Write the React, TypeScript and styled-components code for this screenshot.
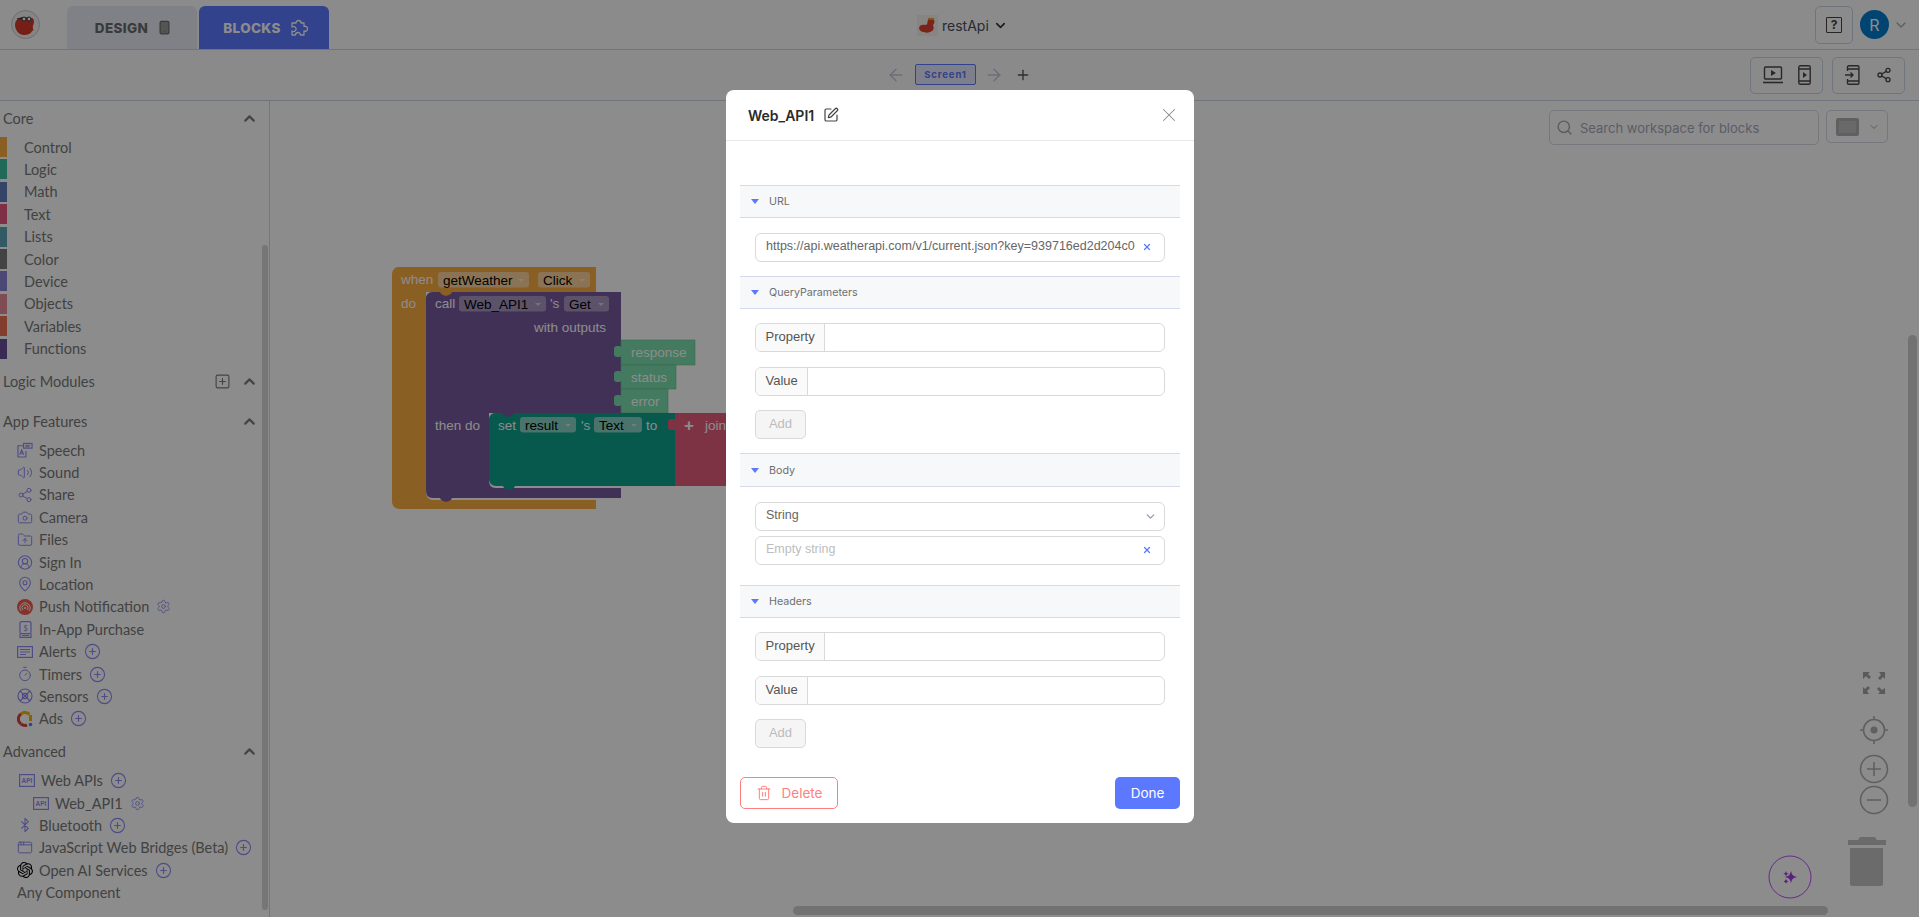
import React from 'react';
import styled, { createGlobalStyle } from 'styled-components';
import {
    AppWindow,
    Bluetooth,
    Camera,
    ChevronDown,
    ChevronUp,
    CircleUserRound,
    FolderUp,
    MapPin,
    Plus,
    Search,
    Settings,
    Share2,
    Smartphone,
    SquarePen,
    SquarePlus,
    Timer,
    Trash2,
    Volume2,
    X,
    ArrowLeft,
    ArrowRight,
    CirclePlus,
} from 'lucide-react';
import { SiOpenai } from 'react-icons/si';

const GlobalStyle = createGlobalStyle`
    html, body {
        margin: 0;
        height: 100%;
        overflow: hidden;
        background: #fff;
    }
    * {
        box-sizing: border-box;
    }
`;

const Page = styled.div`
    position: relative;
    width: 1919px;
    height: 917px;
    overflow: hidden;
    font-family: 'Inter', 'Liberation Sans', sans-serif;
    display: flex;
    flex-direction: column;
`;

const TopBar = styled.header`
    height: 50px;
    flex: none;
    display: flex;
    align-items: flex-end;
    background: #fdfeff;
    border-bottom: 1px solid #cdd3e6;
    padding: 0 10px 0 11px;
`;

const LogoBadge = styled.div`
    width: 29px;
    height: 29px;
    margin: 0 27px 10px 0;
    flex: none;
`;

const Tab = styled.div<{ $active?: boolean }>`
    width: 130px;
    height: 43px;
    margin-right: 2px;
    padding-left: 3px;
    border-radius: 6px 6px 0 0;
    display: flex;
    align-items: center;
    justify-content: center;
    gap: 9px;
    font-size: 13.5px;
    font-weight: 800;
    letter-spacing: 0.35px;
    background: ${p => (p.$active ? '#5b78ff' : '#e8ebf5')};
    color: ${p => (p.$active ? '#fff' : '#6b6b6b')};
`;

const ProjectName = styled.div`
    position: absolute;
    left: 917px;
    top: 13px;
    height: 24px;
    display: flex;
    align-items: center;
    gap: 4px;
    font-size: 14px;
    color: #4b4f5a;
`;

const TopRight = styled.div`
    margin-left: auto;
    display: flex;
    align-items: center;
    height: 49px;
`;

const HelpButton = styled.div`
    width: 38px;
    height: 38px;
    border: 1px solid #cdd3e6;
    border-radius: 5px;
    display: flex;
    align-items: center;
    justify-content: center;
    margin-right: 7px;
`;

const HelpGlyph = styled.span`
    width: 16px;
    height: 16px;
    border: 1.5px solid #444;
    border-radius: 1px;
    font-size: 12px;
    line-height: 13px;
    font-weight: 700;
    text-align: center;
    color: #444;
`;

const Avatar = styled.div`
    width: 29px;
    height: 29px;
    border-radius: 50%;
    background: #007dd0;
    color: #fff;
    font-size: 16px;
    display: flex;
    align-items: center;
    justify-content: center;
    margin-right: 4px;
`;

const ToolBar = styled.div`
    height: 51px;
    flex: none;
    display: flex;
    align-items: center;
    justify-content: flex-end;
    gap: 9px;
    padding-right: 14px;
    background: #fbfcfe;
    border-bottom: 1px solid #cdd3e6;
`;

const ScreenNav = styled.div`
    position: absolute;
    left: 886px;
    top: 62px;
    display: flex;
    align-items: center;
    height: 25px;
`;

const ScreenChip = styled.div`
    width: 61px;
    height: 21px;
    margin: 0 8px 0 9px;
    border: 1px solid #5b78ff;
    border-radius: 2px;
    background: #e3e8fb;
    color: #5b78ff;
    font-size: 9.5px;
    font-weight: 700;
    letter-spacing: 0.9px;
    display: flex;
    align-items: center;
    justify-content: center;
`;

const NavPlus = styled.span`
    display: flex;
    margin-left: 11px;
    color: #555;
`;

const ToolGroup = styled.div`
    width: 73px;
    height: 37px;
    border: 1px solid #cdd3e6;
    border-radius: 5px;
    display: flex;
    align-items: center;
    justify-content: space-around;
    padding: 0 4px;
`;

const Main = styled.div`
    flex: 1;
    display: flex;
    min-height: 0;
`;

const Sidebar = styled.aside`
    position: relative;
    width: 270px;
    flex: none;
    border-right: 1px solid #d6d9e4;
    font-family: 'Lato', 'Liberation Sans', sans-serif;
    font-size: 14.5px;
    color: #787878;
`;

const SideScroll = styled.div`
    position: absolute;
    right: 1px;
    top: 144px;
    width: 6px;
    height: 665px;
    border-radius: 3px;
    background: #d8d8d8;
`;

const Section = styled.section`
    margin-bottom: 4.5px;
`;

const SectionTitle = styled.div`
    height: 35px;
    display: flex;
    align-items: center;
    padding: 0 11px 0 3px;
    font-size: 14.5px;
    span {
        flex: 1;
    }
    svg {
        color: #7c7c7c;
    }
`;

const TitleAdd = styled.span`
    flex: none !important;
    display: flex;
    margin-right: 10px;
`;

const CategoryRow = styled.div`
    height: 22.4px;
    display: flex;
    align-items: center;
    padding-left: 24px;
    position: relative;
`;

const Swatch = styled.i<{ $color: string }>`
    position: absolute;
    left: 0;
    top: 1px;
    width: 7px;
    height: 20px;
    background: ${p => p.$color};
`;

const FeatureRow = styled.div<{ $indent?: number }>`
    height: 22.4px;
    display: flex;
    align-items: center;
    gap: 6px;
    padding-left: ${p => 17 + (p.$indent || 0)}px;
    white-space: nowrap;
`;

const IconSlot = styled.span`
    width: 16px;
    height: 16px;
    flex: none;
    display: flex;
    align-items: center;
    justify-content: center;
    color: #8f8bf5;
`;

const AddMark = styled.span`
    display: flex;
    color: #8f8bf5;
    margin-left: 1px;
`;

const Workspace = styled.div`
    position: relative;
    flex: 1;
`;

const BlockCanvas = styled.svg`
    position: absolute;
    left: -270px;
    top: -101px;
    width: 1919px;
    height: 917px;
    font-family: 'Liberation Sans', sans-serif;
    font-size: 13.5px;
    pointer-events: none;
`;

const SearchBox = styled.div`
    position: absolute;
    left: 1279px;
    top: 9px;
    width: 270px;
    height: 35px;
    border: 1px solid #d6d9e4;
    border-radius: 5px;
    display: flex;
    align-items: center;
    gap: 7px;
    padding-left: 6px;
    font-size: 13px;
    color: #a8a8ba;
    svg {
        color: #a8a8a8;
    }
`;

const ViewPicker = styled.div`
    position: absolute;
    left: 1556px;
    top: 9px;
    width: 62px;
    height: 33px;
    border: 1px solid #d6d9e4;
    border-radius: 5px;
    display: flex;
    align-items: center;
    gap: 9px;
    padding-left: 9px;
    color: #aaa;
`;

const ViewGlyph = styled.i`
    width: 23px;
    height: 18px;
    border: 3px solid #b0b0b0;
    border-radius: 2px;
    background: #c0c0c0;
`;

const CanvasScrollY = styled.div`
    position: absolute;
    right: 2px;
    top: 234px;
    width: 9px;
    height: 472px;
    border-radius: 5px;
    background: #d0d0d0;
`;

const CanvasScrollX = styled.div`
    position: absolute;
    left: 523px;
    bottom: 2px;
    width: 1035px;
    height: 9px;
    border-radius: 5px;
    background: #d0d0d0;
`;

const Dimmer = styled.div`
    position: absolute;
    inset: 0;
    background: rgba(0, 0, 0, 0.45);
    display: flex;
    justify-content: center;
    align-items: flex-start;
    padding-top: 90px;
`;

const Modal = styled.div`
    width: 468px;
    height: 733px;
    background: #fff;
    border-radius: 8px;
    margin-left: 1px;
    display: flex;
    flex-direction: column;
`;

const ModalHead = styled.div`
    height: 51px;
    flex: none;
    display: flex;
    align-items: center;
    padding: 0 14px 0 22px;
    border-bottom: 1px solid #e8e8e8;
    font-size: 14px;
    font-weight: 600;
    color: #2b2b2b;
    span {
        margin-right: 9px;
    }
`;

const CloseMark = styled.div`
    margin-left: auto;
    display: flex;
    color: #8a8a8a;
`;

const ModalBody = styled.div`
    flex: 1;
    padding: 44px 14px 0;
`;

const SectionBar = styled.div<{ $tall?: boolean }>`
    height: ${p => (p.$tall ? 34 : 33)}px;
    display: flex;
    align-items: center;
    gap: 10px;
    padding-left: 11px;
    background: #f7f8fa;
    border-top: 1px solid #d4daec;
    border-bottom: 1px solid #d4daec;
    font-size: 10.7px;
    color: #6f6f6f;
`;

const CaretDown = styled.i`
    width: 0;
    height: 0;
    border-left: 4px solid transparent;
    border-right: 4px solid transparent;
    border-top: 5px solid #5b78ff;
`;

const FieldStack = styled.div<{ $gap?: number; $bottom?: number }>`
    display: flex;
    flex-direction: column;
    align-items: flex-start;
    gap: ${p => p.$gap ?? 14.5}px;
    padding: 14.5px 15px ${p => p.$bottom ?? 14}px;
`;

const FieldRow = styled.div`
    width: 100%;
    height: 29px;
    border: 1px solid #d9d9d9;
    border-radius: 6px;
    display: flex;
    align-items: center;
    font-family: 'Liberation Sans', sans-serif;
    font-size: 13px;
    color: #666;
    overflow: hidden;
    background: #fff;
`;

const FieldPrefix = styled.div`
    height: 100%;
    flex: none;
    display: flex;
    align-items: center;
    padding: 0 9.5px 2px;
    background: #fafafa;
    border-right: 1px solid #d9d9d9;
    color: #555;
`;

const FieldValue = styled.div<{ $muted?: boolean }>`
    flex: 1;
    min-width: 0;
    padding: 0 0 2px 10px;
    white-space: nowrap;
    font-size: 12.5px;
    color: ${p => (p.$muted ? '#bdbdbd' : '#666')};
`;

const ClearMark = styled.div`
    width: 34px;
    flex: none;
    display: flex;
    justify-content: center;
    color: #5b78ff;
`;

const SelectMark = styled.div`
    width: 28px;
    flex: none;
    display: flex;
    justify-content: center;
    color: #9a9ab8;
`;

const AddButton = styled.div`
    width: 51px;
    height: 29px;
    padding-bottom: 2px;
    border: 1px solid #d9d9d9;
    border-radius: 5px;
    background: #f5f5f5;
    color: #bcbcbc;
    font-family: 'Liberation Sans', sans-serif;
    font-size: 13px;
    display: flex;
    align-items: center;
    justify-content: center;
`;

const ModalFoot = styled.div`
    display: flex;
    justify-content: space-between;
    padding: 15px 14px 15px;
`;

const DeleteButton = styled.div`
    width: 98px;
    height: 32px;
    border: 1px solid #ff7f7f;
    border-radius: 5px;
    color: #ff7f7f;
    display: flex;
    align-items: center;
    justify-content: center;
    gap: 10px;
    font-size: 13.5px;
`;

const DoneButton = styled.div`
    width: 65px;
    height: 32px;
    border-radius: 5px;
    background: #5b78ff;
    color: #fff;
    display: flex;
    align-items: center;
    justify-content: center;
    font-size: 13.5px;
`;

const CATEGORIES = [
    { name: 'Control', color: '#fbad43' },
    { name: 'Logic', color: '#3fbfa3' },
    { name: 'Math', color: '#5f7dbf' },
    { name: 'Text', color: '#e5577f' },
    { name: 'Lists', color: '#5ba5b8' },
    { name: 'Color', color: '#7a7a7a' },
    { name: 'Device', color: '#8a84d8' },
    { name: 'Objects', color: '#e58a96' },
    { name: 'Variables', color: '#ee7050' },
    { name: 'Functions', color: '#6b4f9c' },
];

const Logo = ({ size }: { size: number }) => (
    <svg width={size} height={size} viewBox="0 0 29 29">
        <circle cx="14.5" cy="14.5" r="14" fill="#f2f2f2" stroke="#c8c8d0" />
        <path d="M4 15c0-5 4-8 9-8s5 1 8 1c3 1 2 6 1 8s2 5-1 5c-1 3-5 4-8 4-5 0-9-5-9-10z" fill="#d63a2a" />
        <circle cx="13" cy="9" r="2" fill="#fff" stroke="#333" />
        <circle cx="18" cy="9" r="2" fill="#fff" stroke="#333" />
        <path d="M6 9l5-1" stroke="#333" strokeWidth="1.2" />
    </svg>
);

const DragonMark = () => (
    <svg width="21" height="21" viewBox="0 0 21 21">
        <rect width="21" height="21" fill="#f6f3ee" />
        <path d="M2 13c0-3 4-4 7-3 2-1 1-3 2-5 2-1 5-1 6 0 1 2 0 4-1 5 1 2 1 5-1 6-3 2-6 2-8 1-3 0-5-2-5-4z" fill="#e2402e" />
        <rect x="11" y="3" width="6" height="2" fill="#e8a020" />
    </svg>
);

const PuzzleMark = () => (
    <svg width="18" height="19" viewBox="0 0 18 19" fill="none" stroke="currentColor" strokeWidth="1.3" strokeLinejoin="round">
        <path d="M2 5h4a2.5 2.5 0 1 1 5 0h3v3.5a2.5 2.5 0 1 1 0 4.5v4h-3.5a2.5 2.5 0 1 0-5 0H2v-4a2.5 2.5 0 1 0 0-4z" />
    </svg>
);

const ApiIcon = () => (
    <svg width="16" height="13" viewBox="0 0 16 13">
        <rect x=".6" y=".6" width="14.8" height="11.8" fill="none" stroke="currentColor" strokeWidth="1.2" />
        <text x="8" y="9.2" textAnchor="middle" fontSize="6.5" fontWeight="700" fontFamily="Liberation Sans" fill="currentColor">
            API
        </text>
    </svg>
);

const SpeechIcon = () => (
    <svg width="17" height="16" viewBox="0 0 17 16" fill="none" stroke="currentColor" strokeWidth="1.2">
        <path d="M7 3.5H1v12h8.5V9" />
        <rect x="7" y="1" width="9" height="5" />
        <path d="M3 13l2-5 2 5M3.7 11.5h2.6M9 3h5M9 4.5h4" />
    </svg>
);

const PushIcon = () => (
    <svg width="16" height="16" viewBox="0 0 16 16">
        <circle cx="8" cy="8" r="8" fill="#f25c4d" />
        <path d="M4 12a5 5 0 1 1 8 0M6 11a3 3 0 1 1 4 0" fill="none" stroke="#fff" strokeWidth="1" />
        <circle cx="8" cy="9" r="1" fill="#fff" />
    </svg>
);

const PurchaseIcon = () => (
    <svg width="13" height="17" viewBox="0 0 13 17" fill="none" stroke="currentColor" strokeWidth="1.2">
        <rect x="1" y=".6" width="11" height="12" rx="1.5" />
        <path d="M1 12.5v3.8h11v-3.8M3 14.5h7" />
        <text x="6.5" y="10" textAnchor="middle" fontSize="8" fill="currentColor" stroke="none">
            $
        </text>
    </svg>
);

const AlertIcon = () => (
    <svg width="16" height="12" viewBox="0 0 16 12" fill="none" stroke="currentColor" strokeWidth="1.2">
        <rect x=".6" y=".6" width="14.8" height="10.8" />
        <path d="M3 3.5h10M3 6h10M3 8.5h6" />
    </svg>
);

const SensorIcon = () => (
    <svg width="16" height="16" viewBox="0 0 16 16" fill="none" stroke="currentColor" strokeWidth="1.2">
        <circle cx="8" cy="8" r="7" />
        <circle cx="8" cy="8" r="2.6" />
        <path d="M3 3l10 10M13 3L3 13" />
    </svg>
);

const AdsIcon = () => (
    <svg width="16" height="16" viewBox="0 0 16 16" fill="none">
        <path d="M12.5 3.5A6 6 0 0 0 4 3" stroke="#f4b400" strokeWidth="3" />
        <path d="M4 3a6 6 0 0 0 0 10" stroke="#db4437" strokeWidth="3" />
        <path d="M4 13a6 6 0 0 0 6 1" stroke="#db4437" strokeWidth="3" />
        <path d="M13.5 4v6" stroke="#f4b400" strokeWidth="3" />
        <circle cx="13.5" cy="13.5" r="1.8" fill="#4285f4" />
    </svg>
);

const Plusy = () => (
    <AddMark>
        <CirclePlus size={17} strokeWidth={1.6} />
    </AddMark>
);

const Gear = () => (
    <AddMark>
        <Settings size={15} strokeWidth={1.4} />
    </AddMark>
);

const Field = ({ x, w, y, label, fill }: { x: number; w: number; y: number; label: string; fill: string }) => (
    <g>
        <rect x={x} y={y} width={w} height={15.5} rx={3} fill={fill} />
        <text x={x + 5} y={y + 12.5} fill="#000">
            {label}
        </text>
        <path d={`M${x + w - 11} ${y + 7}h6l-3 3z`} fill="#fff" opacity={0.55} />
    </g>
);

const BlockText = ({ x, y, children }: { x: number; y: number; children: React.ReactNode }) => (
    <text x={x} y={y} fill="#fff">
        {children}
    </text>
);

const OutputBlock = ({ y, w, h, label }: { y: number; w: number; h: number; label: string }) => (
    <g>
        <rect x={621} y={y} width={w} height={h} fill="#7ddfae" stroke="#64c292" strokeWidth={0.6} />
        <rect x={614} y={y + 6} width={8} height={11} rx={3} fill="#7ddfae" />
        <BlockText x={631} y={y + 17}>
            {label}
        </BlockText>
    </g>
);

const Blocks = () => (
    <BlockCanvas viewBox="0 0 1919 917">
        <path
            d="M398 267H596V292H426V491c0 5 2 9 7 9H596V509H400c-5 0-8-3-8-8V275c0-5 3-8 6-8z"
            fill="#fbad43"
        />
        <BlockText x={401} y={284}>
            when
        </BlockText>
        <Field x={438} w={91} y={272} label="getWeather" fill="#fdd49b" />
        <Field x={538} w={52} y={272} label="Click" fill="#fdd49b" />
        <BlockText x={401} y={308}>
            do
        </BlockText>

        <path
            d="M432 292H621V413H489V480c0 5 2 8 7 8H621V498H433c-5 0-7-3-7-8V298c0-3 3-6 6-6z"
            fill="#77599f"
        />
        <path d="M440 292h12c-2 5-10 5-12 0z" fill="#fbad43" />
        <path d="M440 498c2 5 10 5 12 0z" fill="#77599f" />
        <BlockText x={435} y={308}>
            call
        </BlockText>
        <Field x={459} w={87} y={296} label="Web_API1" fill="#a896c2" />
        <BlockText x={550} y={308}>
            's
        </BlockText>
        <Field x={564} w={45} y={296} label="Get" fill="#a896c2" />
        <BlockText x={534} y={332}>
            with outputs
        </BlockText>
        <BlockText x={435} y={430}>
            then do
        </BlockText>

        <OutputBlock y={340} w={74} h={25} label="response" />
        <OutputBlock y={365} w={55} h={24} label="status" />
        <OutputBlock y={389} w={47} h={24} label="error" />

        <path
            d="M495 413H675V486H496c-4 0-7-3-7-7V419c0-3 3-6 6-6z"
            fill="#0ba38a"
        />
        <path d="M502 413h12c-2 5-10 5-12 0z" fill="#77599f" />
        <path d="M503 486c2 5 10 5 12 0z" fill="#0ba38a" />
        <BlockText x={498} y={430}>
            set
        </BlockText>
        <Field x={520} w={56} y={417} label="result" fill="#86d1c4" />
        <BlockText x={581} y={430}>
            's
        </BlockText>
        <Field x={594} w={48} y={417} label="Text" fill="#86d1c4" />
        <BlockText x={646} y={430}>
            to
        </BlockText>

        <rect x={675} y={413} width={60} height={73} fill="#e55e7f" />
        <rect x={668} y={419} width={9} height={11} rx={3} fill="#e55e7f" />
        <text x={684} y={431} fontSize={17} fontWeight={700} fill="#fff">
            +
        </text>
        <BlockText x={705} y={430}>
            join
        </BlockText>

        {/* workspace controls */}
        <g fill="#a0a5a8">
            <path d="M1863 672h7l-2 2 3 3-2 2-3-3-3 3zM1885 672v7l-2-2-3 3-2-2 3-3-2-3zM1863 694v-7l2 2 3-3 2 2-3 3 2 3zM1885 694h-7l2-2-3-3 2-2 3 3 3-2z" />
        </g>
        <g fill="none" stroke="#b0b0b0" strokeWidth={1.6}>
            <circle cx={1874} cy={730} r={10.5} />
            <path d="M1874 716v4M1874 740v4M1860 730h4M1884 730h4" />
            <circle cx={1874} cy={769} r={13.5} />
            <path d="M1867 769h14M1874 762v14" />
            <circle cx={1874} cy={800} r={13.5} />
            <path d="M1867 800h14" />
        </g>
        <circle cx={1874} cy={730} r={3.5} fill="#b0b0b0" />
        <g fill="#c4c4c4">
            <path d="M1848 840h10l2-3h15l2 3h9v5h-38z" />
            <path d="M1850 848h33v36c0 1-1 2-2 2h-29c-1 0-2-1-2-2z" />
        </g>
        <circle cx={1790} cy={877} r={21} fill="none" stroke="#c04dff" strokeWidth={1} />
        <path
            d="M1791 871c1 4 2 5 6 6-4 1-5 2-6 6-1-4-2-5-6-6 4-1 5-2 6-6zM1786 871l.8 2 2 .8-2 .8-.8 2-.8-2-2-.8 2-.8zM1786 879l.8 1.6 1.6.8-1.6.8-.8 1.6-.8-1.6-1.6-.8 1.6-.8z"
            fill="#a93ae8"
        />
    </BlockCanvas>
);

const PlayLaptop = () => (
    <svg width="20" height="18" viewBox="0 0 20 18" fill="none" stroke="#4a4a4a" strokeWidth="1.4">
        <rect x="1.5" y="1" width="17" height="12" rx="1" />
        <path d="M0 16.5h20" strokeWidth="1.6" />
        <path d="M8 4l5 3-5 3z" fill="#4a4a4a" stroke="none" />
    </svg>
);

const PlayPhone = () => (
    <svg width="13" height="20" viewBox="0 0 13 20" fill="none" stroke="#4a4a4a" strokeWidth="1.4">
        <rect x=".8" y=".8" width="11.4" height="18.4" rx="1.5" />
        <path d="M1 4h11M1 16h11" />
        <path d="M5 7l4 3-4 3z" fill="#4a4a4a" stroke="none" />
    </svg>
);

const ImportPhone = () => (
    <svg width="15" height="20" viewBox="0 0 15 20" fill="none" stroke="#4a4a4a" strokeWidth="1.4">
        <path d="M2.5 6V2c0-.7.5-1.2 1.2-1.2h9c.7 0 1.2.5 1.2 1.2v16c0 .7-.5 1.2-1.2 1.2h-9c-.7 0-1.2-.5-1.2-1.2v-4" />
        <path d="M3 4h11M3 16h11M0 10h8M5.5 7.5L8 10l-2.5 2.5" />
    </svg>
);

const App = () => (
    <Page>
        <GlobalStyle />
        <TopBar>
            <LogoBadge>
                <Logo size={29} />
            </LogoBadge>
            <Tab>
                DESIGN
                <Smartphone size={15} fill="#999" color="#6b6b6b" />
            </Tab>
            <Tab $active>
                BLOCKS
                <PuzzleMark />
            </Tab>
            <ProjectName>
                <DragonMark />
                restApi
                <ChevronDown size={15} strokeWidth={2.6} color="#333" />
            </ProjectName>
            <TopRight>
                <HelpButton>
                    <HelpGlyph>?</HelpGlyph>
                </HelpButton>
                <Avatar>R</Avatar>
                <ChevronDown size={16} color="#aaa" />
            </TopRight>
        </TopBar>
        <ToolBar>
            <ScreenNav>
                <ArrowLeft size={20} strokeWidth={1.6} color="#c4c8d4" />
                <ScreenChip>Screen1</ScreenChip>
                <ArrowRight size={20} strokeWidth={1.6} color="#c4c8d4" />
                <NavPlus>
                    <Plus size={16} />
                </NavPlus>
            </ScreenNav>
            <ToolGroup>
                <PlayLaptop />
                <PlayPhone />
            </ToolGroup>
            <ToolGroup>
                <ImportPhone />
                <Share2 size={16} color="#4a4a4a" strokeWidth={2} />
            </ToolGroup>
        </ToolBar>
        <Main>
            <Sidebar>
                <Section>
                    <SectionTitle>
                        <span>Core</span>
                        <ChevronUp size={17} strokeWidth={3} />
                    </SectionTitle>
                    {CATEGORIES.map(c => (
                        <CategoryRow key={c.name}>
                            <Swatch $color={c.color} />
                            {c.name}
                        </CategoryRow>
                    ))}
                </Section>
                <Section>
                    <SectionTitle>
                        <span>Logic Modules</span>
                        <TitleAdd>
                            <SquarePlus size={17} strokeWidth={1.6} />
                        </TitleAdd>
                        <ChevronUp size={17} strokeWidth={3} />
                    </SectionTitle>
                </Section>
                <Section>
                    <SectionTitle>
                        <span>App Features</span>
                        <ChevronUp size={17} strokeWidth={3} />
                    </SectionTitle>
                    <FeatureRow>
                        <IconSlot><SpeechIcon /></IconSlot>Speech
                    </FeatureRow>
                    <FeatureRow>
                        <IconSlot><Volume2 size={17} strokeWidth={1.5} /></IconSlot>Sound
                    </FeatureRow>
                    <FeatureRow>
                        <IconSlot><Share2 size={16} strokeWidth={1.5} /></IconSlot>Share
                    </FeatureRow>
                    <FeatureRow>
                        <IconSlot><Camera size={17} strokeWidth={1.5} /></IconSlot>Camera
                    </FeatureRow>
                    <FeatureRow>
                        <IconSlot><FolderUp size={16} strokeWidth={1.5} /></IconSlot>Files
                    </FeatureRow>
                    <FeatureRow>
                        <IconSlot><CircleUserRound size={17} strokeWidth={1.6} /></IconSlot>Sign In
                    </FeatureRow>
                    <FeatureRow>
                        <IconSlot><MapPin size={16} strokeWidth={1.6} /></IconSlot>Location
                    </FeatureRow>
                    <FeatureRow>
                        <IconSlot><PushIcon /></IconSlot>Push Notification
                        <Gear />
                    </FeatureRow>
                    <FeatureRow>
                        <IconSlot><PurchaseIcon /></IconSlot>In-App Purchase
                    </FeatureRow>
                    <FeatureRow>
                        <IconSlot><AlertIcon /></IconSlot>Alerts
                        <Plusy />
                    </FeatureRow>
                    <FeatureRow>
                        <IconSlot><Timer size={16} strokeWidth={1.5} /></IconSlot>Timers
                        <Plusy />
                    </FeatureRow>
                    <FeatureRow>
                        <IconSlot><SensorIcon /></IconSlot>Sensors
                        <Plusy />
                    </FeatureRow>
                    <FeatureRow>
                        <IconSlot><AdsIcon /></IconSlot>Ads
                        <Plusy />
                    </FeatureRow>
                </Section>
                <Section>
                    <SectionTitle>
                        <span>Advanced</span>
                        <ChevronUp size={17} strokeWidth={3} />
                    </SectionTitle>
                    <FeatureRow $indent={2}>
                        <IconSlot><ApiIcon /></IconSlot>Web APIs
                        <Plusy />
                    </FeatureRow>
                    <FeatureRow $indent={16}>
                        <IconSlot><ApiIcon /></IconSlot>Web_API1
                        <Gear />
                    </FeatureRow>
                    <FeatureRow>
                        <IconSlot><Bluetooth size={16} strokeWidth={1.6} /></IconSlot>Bluetooth
                        <Plusy />
                    </FeatureRow>
                    <FeatureRow>
                        <IconSlot><AppWindow size={17} strokeWidth={1.5} /></IconSlot>JavaScript Web Bridges (Beta)
                        <Plusy />
                    </FeatureRow>
                    <FeatureRow>
                        <IconSlot><SiOpenai size={16} color="#000" /></IconSlot>Open AI Services
                        <Plusy />
                    </FeatureRow>
                    <FeatureRow>Any Component</FeatureRow>
                </Section>
                <SideScroll />
            </Sidebar>
            <Workspace>
                <Blocks />
                <SearchBox>
                    <Search size={17} />
                    Search workspace for blocks
                </SearchBox>
                <ViewPicker>
                    <ViewGlyph />
                    <ChevronDown size={12} />
                </ViewPicker>
                <CanvasScrollY />
                <CanvasScrollX />
            </Workspace>
        </Main>
        <Dimmer>
            <Modal>
                <ModalHead>
                    <span>Web_API1</span>
                    <SquarePen size={16} strokeWidth={1.8} color="#444" />
                    <CloseMark>
                        <X size={22} strokeWidth={1.1} />
                    </CloseMark>
                </ModalHead>
                <ModalBody>
                    <SectionBar>
                        <CaretDown />
                        URL
                    </SectionBar>
                    <FieldStack>
                        <FieldRow>
                            <FieldValue>https://api.weatherapi.com/v1/current.json?key=939716ed2d204c0</FieldValue>
                            <ClearMark><X size={10} strokeWidth={3} /></ClearMark>
                        </FieldRow>
                    </FieldStack>
                    <SectionBar>
                        <CaretDown />
                        QueryParameters
                    </SectionBar>
                    <FieldStack>
                        <FieldRow>
                            <FieldPrefix>Property</FieldPrefix>
                        </FieldRow>
                        <FieldRow>
                            <FieldPrefix>Value</FieldPrefix>
                        </FieldRow>
                        <AddButton>Add</AddButton>
                    </FieldStack>
                    <SectionBar $tall>
                        <CaretDown />
                        Body
                    </SectionBar>
                    <FieldStack $gap={5} $bottom={20}>
                        <FieldRow>
                            <FieldValue>String</FieldValue>
                            <SelectMark><ChevronDown size={13} strokeWidth={2.6} /></SelectMark>
                        </FieldRow>
                        <FieldRow>
                            <FieldValue $muted>Empty string</FieldValue>
                            <ClearMark><X size={10} strokeWidth={3} /></ClearMark>
                        </FieldRow>
                    </FieldStack>
                    <SectionBar>
                        <CaretDown />
                        Headers
                    </SectionBar>
                    <FieldStack>
                        <FieldRow>
                            <FieldPrefix>Property</FieldPrefix>
                        </FieldRow>
                        <FieldRow>
                            <FieldPrefix>Value</FieldPrefix>
                        </FieldRow>
                        <AddButton>Add</AddButton>
                    </FieldStack>
                </ModalBody>
                <ModalFoot>
                    <DeleteButton>
                        <Trash2 size={16} strokeWidth={1.5} />
                        Delete
                    </DeleteButton>
                    <DoneButton>Done</DoneButton>
                </ModalFoot>
            </Modal>
        </Dimmer>
    </Page>
);

export default App;
